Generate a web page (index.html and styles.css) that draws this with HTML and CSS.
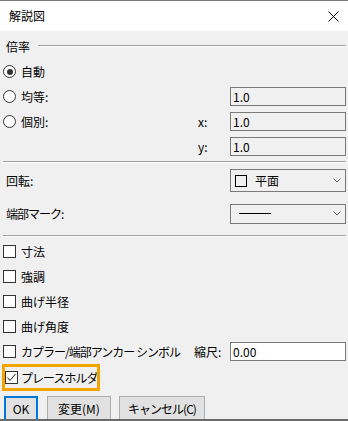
FILE: index.html
```
<!DOCTYPE html>
<html lang="ja">
<head>
  <meta charset="UTF-8" />
  <title>解説図</title>
  <link rel="stylesheet" href="styles.css">
</head>
<body>
<div class="win">
  <div class="titlebar">
    <span class="title">解説図</span>
    <svg class="close" width="11" height="11" viewBox="0 0 11 11">
      <path d="M0.5 0.5 L10.5 10.5 M10.5 0.5 L0.5 10.5" stroke="#000" stroke-width="1" fill="none"/>
    </svg>
  </div>
  <div class="body">
    <div class="group-head"><span>倍率</span><div class="hline"></div></div>
    <div class="row">
      <label class="opt"><span class="radio on"></span>自動</label>
    </div>
    <div class="row">
      <label class="opt"><span class="radio"></span>均等:</label>
      <div class="field off">1.0</div>
    </div>
    <div class="row">
      <label class="opt"><span class="radio"></span>個別:</label>
      <span class="axis">x:</span>
      <div class="field off">1.0</div>
    </div>
    <div class="row">
      <span class="opt"></span>
      <span class="axis">y:</span>
      <div class="field off">1.0</div>
    </div>

    <div class="sep"></div>

    <div class="row combo-row first">
      <span class="lbl">回転:</span>
      <div class="combo tall">
        <span class="sq"></span><span class="ctext">平面</span>
        <svg class="chev" width="8" height="5" viewBox="0 0 8 5"><path d="M0.5 0.5 L4 4 L7.5 0.5" stroke="#666" fill="none"/></svg>
      </div>
    </div>
    <div class="row combo-row second">
      <span class="lbl kana">端部マーク:</span>
      <div class="combo">
        <span class="dash"></span>
        <svg class="chev" width="8" height="5" viewBox="0 0 8 5"><path d="M0.5 0.5 L4 4 L7.5 0.5" stroke="#666" fill="none"/></svg>
      </div>
    </div>

    <div class="sep lower"></div>

    <div class="row"><label class="opt"><span class="check"></span>寸法</label></div>
    <div class="row"><label class="opt"><span class="check"></span>強調</label></div>
    <div class="row"><label class="opt"><span class="check"></span>曲げ半径</label></div>
    <div class="row"><label class="opt"><span class="check"></span>曲げ角度</label></div>
    <div class="row">
      <label class="opt kana"><span class="check"></span>カプラー/端部アンカー シンボル</label>
      <span class="axis wide">縮尺:</span>
      <div class="field">0.00</div>
    </div>

    <div class="focus">
      <label class="opt kana"><span class="check on">
        <svg width="11" height="11" viewBox="0 0 11 11"><path d="M1.5 5.5 L4 8.5 L9.5 2" stroke="#222" fill="none"/></svg>
      </span>プレースホルダ</label>
    </div>

    <div class="buttons">
      <button class="btn ok">OK</button>
      <button class="btn mid">変更(M)</button>
      <button class="btn cancel kana">キャンセル(C)</button>
    </div>
  </div>
</div>
</body>
</html>
```

FILE: styles.css
```
html, body {
  margin: 0;
  padding: 0;
}
body {
  font-family: "Noto Sans CJK JP", "Noto Sans", sans-serif;
  font-size: 12px;
  color: #000;
  white-space: nowrap;
}
.win {
  width: 348px;
  height: 421px;
  box-sizing: border-box;
  background: #f0f0f0;
  border-bottom: 2px solid #6b6b6b;
  overflow: hidden;
}
.titlebar {
  height: 31px;
  box-sizing: border-box;
  border-top: 1px solid #7a7a7a;
  background: #fff;
  display: flex;
  align-items: center;
  padding-left: 9px;
}
.title {
  flex: 1;
  line-height: 16px;
}
.close {
  margin-right: 9px;
  margin-top: 1px;
}
.body {
  padding: 3px 2px 0 3px;
}
.group-head {
  height: 25px;
  display: flex;
  align-items: center;
  padding-left: 3px;
}
.group-head span {
  line-height: 16px;
  margin-right: 8px;
}
.hline {
  flex: 1;
  height: 1px;
  background: #a0a0a0;
  border-bottom: 1px solid #fff;
  margin-top: -2px;
}
.row {
  height: 25px;
  display: flex;
  align-items: center;
}
.opt {
  flex: 1;
  min-width: 0;
  display: flex;
  align-items: center;
  line-height: 16px;
}
.kana {
  letter-spacing: -1px;
}
.radio {
  width: 11px;
  height: 11px;
  border: 1px solid #333;
  border-radius: 50%;
  background: #fff;
  margin-right: 5px;
  display: flex;
  align-items: center;
  justify-content: center;
}
.radio.on::after {
  content: "";
  width: 6px;
  height: 6px;
  border-radius: 50%;
  background: #333;
}
.check {
  flex: none;
  width: 11px;
  height: 11px;
  border: 1px solid #333;
  background: #fff;
  margin-right: 5px;
  display: flex;
}
.check svg {
  display: block;
}
.axis {
  flex: none;
  width: 32px;
  line-height: 16px;
}
.axis.wide {
  width: 36px;
}
.field {
  flex: none;
  width: 116px;
  height: 19px;
  box-sizing: border-box;
  border: 1px solid #7a7a7a;
  background: #fff;
  padding: 0 2px;
  line-height: 17px;
}
.field.off {
  background: #f0f0f0;
}
.sep {
  height: 1px;
  background: #a0a0a0;
  border-bottom: 1px solid #fff;
  margin: 2px 0 2px 0;
}
.sep.lower {
  margin: 4px 0 2px 0;
}
.combo-row.first {
  height: 31px;
}
.combo-row.second {
  height: 35px;
}
.lbl {
  flex: 1;
  line-height: 16px;
  padding-left: 3px;
}
.combo {
  flex: none;
  width: 116px;
  height: 20px;
  box-sizing: border-box;
  border: 1px solid #7a7a7a;
  background: #f0f0f0;
  display: flex;
  align-items: center;
  padding: 0 4px 0 8px;
}
.combo.tall {
  height: 23px;
  padding-left: 4px;
}
.sq {
  width: 10px;
  height: 10px;
  border: 1px solid #000;
  margin-right: 8px;
}
.ctext {
  flex: 1;
  line-height: 16px;
}
.dash {
  width: 32px;
  height: 1px;
  background: #000;
  margin-right: auto;
}
.chev {
  display: block;
}
.focus {
  width: 98px;
  height: 27px;
  box-sizing: border-box;
  border: 3px solid #f5a500;
  margin-left: -1px;
  display: flex;
  align-items: center;
  overflow: hidden;
}
.focus .check {
  margin-right: 3px;
}
.buttons {
  display: flex;
  margin-top: 5px;
  padding-left: 1px;
}
.btn {
  height: 25px;
  box-sizing: border-box;
  font-family: inherit;
  font-size: 12px;
  background: #e1e1e1;
  border: 1px solid #adadad;
  padding: 0;
  color: #000;
  margin-right: 9px;
}
.btn.ok {
  width: 34px;
  border: 2px solid #0078d7;
}
.btn.mid {
  width: 64px;
  margin-right: 8px;
}
.btn.cancel {
  width: 86px;
}
```
